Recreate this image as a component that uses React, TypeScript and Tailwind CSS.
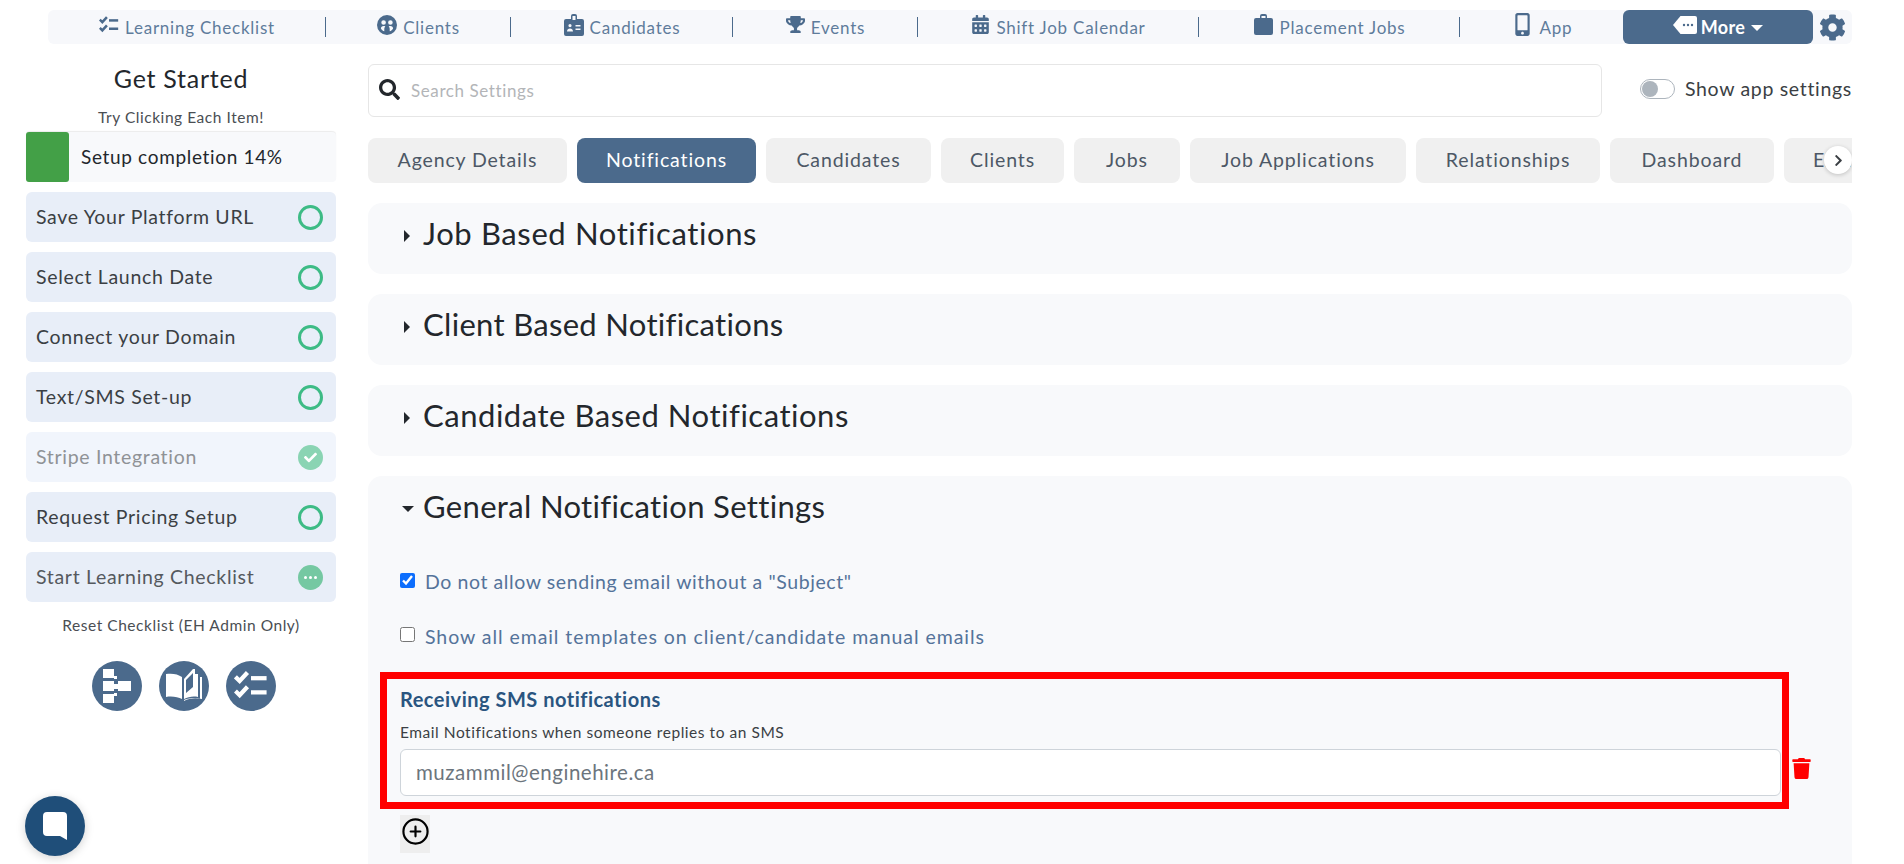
import { FaCalendarAlt, FaCheck, FaChevronRight, FaCog, FaMobileAlt, FaSearch, FaTrash, FaTrophy } from 'react-icons/fa';
import { CirclePlus } from 'lucide-react';
import type { ReactNode } from 'react';

const font = { fontFamily: '"Lato", "Noto Sans", sans-serif' };

function ChecksIcon({ size }: { size: number }) {
    return (
        <svg width={size} height={size} viewBox="0 0 24 24" fill="none" stroke="currentColor" strokeWidth="3">
            <path d="M1 5.5l3 3l5.5-6" />
            <path d="M1 15.5l3 3l5.5-6" />
            <path d="M12 6.5h11" />
            <path d="M12 16.5h11" />
        </svg>
    );
}

function ClientsIcon() {
    return (
        <svg width="20" height="20" viewBox="0 0 20 20" fill="currentColor">
            <path fillRule="evenodd" d="M10 0a10 10 0 1 1 0 20a10 10 0 0 1 0-20zM6.6 5.2a2.3 2.3 0 1 0 0 4.6a2.3 2.3 0 0 0 0-4.6zM13.4 5.2a2.3 2.3 0 1 0 0 4.6a2.3 2.3 0 0 0 0-4.6zM6.6 11c-1.6 0-2.7 1-2.7 2.4c.8 1.3 1.9 2.3 3.4 2.9v-2.6c0-.9.4-1.7 1-2.3c-.5-.3-1-.4-1.7-.4zM13.4 11c-.7 0-1.2.1-1.7.4c.6.6 1 1.4 1 2.3v2.6c1.5-.6 2.6-1.6 3.4-2.9c0-1.4-1.1-2.4-2.7-2.4z" />
        </svg>
    );
}

function BadgeIcon() {
    return (
        <svg width="20" height="22" viewBox="0 0 20 22" fill="currentColor">
            <path fillRule="evenodd" d="M7 5V2a2 2 0 0 1 2-2h2a2 2 0 0 1 2 2v3h5a2 2 0 0 1 2 2v13a2 2 0 0 1-2 2H2a2 2 0 0 1-2-2V7a2 2 0 0 1 2-2h5zM8.5 2v4h3V2h-3zM6 10a1.6 1.6 0 1 0 0 3.2a1.6 1.6 0 0 0 0-3.2zM3 17.5h6c0-1.700-1.300-3-3-3s-3 1.300-3 3zM11.500 11v1.500h5V11h-5zM11.500 14.500V16h5v-1.500h-5z" />
        </svg>
    );
}

function CaseIcon() {
    return (
        <svg width="19" height="21" viewBox="0 0 19 21" fill="currentColor">
            <path fillRule="evenodd" d="M6 4V2a2 2 0 0 1 2-2h3a2 2 0 0 1 2 2v2h4a2 2 0 0 1 2 2v13a2 2 0 0 1-2 2H2a2 2 0 0 1-2-2V6a2 2 0 0 1 2-2h4zM7.500 2v2h4V2h-4z" />
        </svg>
    );
}

function MoreTagIcon() {
    return (
        <svg width="24" height="20" viewBox="0 0 24 20">
            <path d="M7.5 1H22a2 2 0 0 1 2 2v14a2 2 0 0 1-2 2H7.5L0 10z" fill="#fff" />
            <circle cx="11" cy="10" r="1.2" fill="#4b6a8c" />
            <circle cx="15" cy="10" r="1.2" fill="#4b6a8c" />
            <circle cx="19" cy="10" r="1.2" fill="#4b6a8c" />
        </svg>
    );
}

function FlowIcon() {
    return (
        <svg width="28" height="34" viewBox="0 0 28 34" fill="#fff">
            <rect x="0" y="0" width="11" height="9" />
            <rect x="0" y="12" width="11" height="10" />
            <rect x="0" y="25" width="11" height="9" />
            <rect x="11" y="15" width="17" height="5" />
            <rect x="15" y="12" width="13" height="10" />
            <rect x="11" y="7" width="3" height="3" />
            <rect x="11" y="24" width="3" height="3" />
        </svg>
    );
}

function BookIcon() {
    return (
        <svg width="38" height="34" viewBox="0 0 38 34" fill="#fff">
            <path d="M1 5c6-1 12 0 16 3v22c-4-2-10-3-16-2z" />
            <path fillRule="evenodd" d="M19 30V10l9-10h2v5h3v23c-5-1-10 0-14 2zM21 24l7-6V4l-7 7z" />
            <path d="M35 8h2v22c-6-1.500-13-1-18 2v-1c5-2 11-2.500 16-1.500z" />
        </svg>
    );
}

function NavItem({ width, icon, label, sep = true, gap = 'mr-[6px]' }: { width: string; icon: ReactNode; label: string; sep?: boolean; gap?: string }) {
    return (
        <div className={`${width} h-full flex items-center justify-center relative`}>
            <span className={`text-[#4b6a8c] -mt-[5px] ${gap}`}>{icon}</span>
            <span className="text-[17px] tracking-[0.045em] text-[#5f7c9b] mt-px">{label}</span>
            {sep && <span className="absolute right-0 top-[7px] h-[20px] w-px bg-[#4b6a8c]" />}
        </div>
    );
}

function Tab({ width, label, active }: { width: string; label: string; active?: boolean }) {
    return (
        <div className={`${width} shrink-0 h-full pb-[2px] rounded-[8px] flex items-center justify-center text-[19.5px] tracking-[0.045em] ${active ? 'bg-[#4b6a8c] text-white' : 'bg-[#f0f0f0] text-[#4d5866]'}`}>
            {label}
        </div>
    );
}

function CheckItem({ label, state, faded }: { label: string; state: 'open' | 'done' | 'busy'; faded?: boolean }) {
    return (
        <div className={`h-[50px] rounded-[6px] pl-[10px] pr-[13px] flex items-center justify-between ${faded ? 'bg-[#f1f5fc]' : 'bg-[#e8eef8]'}`}>
            <span className={`text-[19.5px] tracking-[0.035em] ${faded ? 'text-[#8f9296]' : state === 'busy' ? 'text-[#55595e]' : 'text-[#3b3f44]'}`}>{label}</span>
            {state === 'open' && <span className="w-[25px] h-[25px] rounded-full border-[3px] border-[#3dbb85]" />}
            {state === 'done' && (
                <span className="w-[25px] h-[25px] rounded-full bg-[#8ad4b3] flex items-center justify-center text-white">
                    <FaCheck size={13} />
                </span>
            )}
            {state === 'busy' && (
                <span className="w-[25px] h-[25px] rounded-full bg-[#75c8a2] flex items-center justify-center gap-[2px]">
                    <span className="w-[3px] h-[3px] rounded-full bg-white" />
                    <span className="w-[3px] h-[3px] rounded-full bg-white" />
                    <span className="w-[3px] h-[3px] rounded-full bg-white" />
                </span>
            )}
        </div>
    );
}

function Accordion({ label, spacing }: { label: string; spacing: string }) {
    return (
        <div className="h-[71px] rounded-[14px] bg-[#f8f9fb] pl-[36px] pb-[10px] flex items-center text-[#23272c]">
            <span className="w-0 h-0 border-y-[6px] border-y-transparent border-l-[6px] border-l-[#23272c] mr-[13px] mt-[5px]" />
            <span className={`text-[31px] ${spacing}`}>{label}</span>
        </div>
    );
}

export default function App() {
    return (
        <div className="h-[864px] w-[1904px] overflow-hidden bg-white" style={font}>
            {/* top nav */}
            <div className="pt-[10px] pl-[48px]">
                <div className="w-[1804px] h-[34px] bg-[#f7f8fb] rounded-[6px] flex">
                    <NavItem width="w-[278px]" icon={<ChecksIcon size={20} />} label="Learning Checklist" />
                    <NavItem width="w-[185px]" icon={<ClientsIcon />} label="Clients" />
                    <NavItem width="w-[222px]" icon={<BadgeIcon />} label="Candidates" />
                    <NavItem width="w-[185px]" icon={<FaTrophy size={19} />} label="Events" />
                    <NavItem width="w-[281px]" icon={<FaCalendarAlt size={19} />} label="Shift Job Calendar" />
                    <NavItem width="w-[261px]" icon={<CaseIcon />} label="Placement Jobs" gap="mr-[7px]" />
                    <NavItem width="w-[163px]" icon={<FaMobileAlt size={23} />} label="App" sep={false} />
                    <div className="w-[190px] h-full rounded-[6px] bg-[#4b6a8c] text-white flex items-center justify-center gap-[4px]">
                        <span className="-mt-[4px]"><MoreTagIcon /></span>
                        <span className="text-[18px] font-bold tracking-[0.02em]">More</span>
                        <span className="w-0 h-0 border-x-[6px] border-x-transparent border-t-[6px] border-t-white ml-[2px] mt-[2px]" />
                    </div>
                    <div className="flex-1 flex items-center justify-center text-[#4b6a8c]">
                        <FaCog size={27} />
                    </div>
                </div>
            </div>

            <div className="flex pt-[16px]">
                {/* left checklist */}
                <div className="w-[310px] ml-[26px] shrink-0 flex flex-col">
                    <div className="h-[38px] flex items-center justify-center text-[25px] tracking-[0.03em] text-[#23272c]">Get Started</div>
                    <div className="h-[34px] pt-[6px] flex items-center justify-center text-[15.5px] tracking-[0.035em] text-[#4a4e53]">Try Clicking Each Item!</div>
                    <div className="h-[50px] bg-[#f8f9fb] rounded-[4px] flex items-center shadow-[0_-1px_1px_rgba(0,0,0,0.08)]">
                        <span className="w-[43px] h-full bg-[#43a047] rounded-[3px]" />
                        <span className="ml-[12px] text-[19px] tracking-[0.035em] text-[#23272c]">Setup completion 14%</span>
                    </div>
                    <div className="mt-[10px] flex flex-col gap-[10px]">
                        <CheckItem label="Save Your Platform URL" state="open" />
                        <CheckItem label="Select Launch Date" state="open" />
                        <CheckItem label="Connect your Domain" state="open" />
                        <CheckItem label="Text/SMS Set-up" state="open" />
                        <CheckItem label="Stripe Integration" state="done" faded />
                        <CheckItem label="Request Pricing Setup" state="open" />
                        <CheckItem label="Start Learning Checklist" state="busy" />
                    </div>
                    <div className="mt-[12px] text-center text-[15.5px] tracking-[0.035em] text-[#4a4e53]">Reset Checklist (EH Admin Only)</div>
                    <div className="mt-[24px] pl-[5px] flex justify-center gap-[17px]">
                        <span className="w-[50px] h-[50px] rounded-full bg-[#4b6a8c] flex items-center justify-center"><FlowIcon /></span>
                        <span className="w-[50px] h-[50px] rounded-full bg-[#4b6a8c] flex items-center justify-center"><BookIcon /></span>
                        <span className="w-[50px] h-[50px] rounded-full bg-[#4b6a8c] flex items-center justify-center text-white"><ChecksIcon size={34} /></span>
                    </div>
                </div>

                {/* settings */}
                <div className="w-[1484px] ml-[32px] shrink-0 pt-[4px]">
                    <div className="flex">
                        <div className="w-[1234px] h-[53px] rounded-[6px] border border-[#e6e6e6] flex items-center pl-[10px]">
                            <FaSearch size={21} className="text-[#23272c] -mt-[3px]" />
                            <span className="ml-[11px] text-[17px] tracking-[0.035em] text-[#b3b5b8] mt-px">Search Settings</span>
                        </div>
                        <div className="ml-[38px] h-[50px] flex items-center">
                            <span className="w-[35px] h-[20px] rounded-full border border-[#adb5bd] bg-white flex items-center pl-[1px]">
                                <span className="w-[16px] h-[16px] rounded-full bg-[#adb5bd]" />
                            </span>
                            <span className="ml-[10px] text-[19.5px] tracking-[0.035em] text-[#3b3f44] whitespace-nowrap">Show app settings</span>
                        </div>
                    </div>

                    <div className="relative mt-[21px] h-[45px] flex gap-[10px] overflow-hidden">
                        <Tab width="w-[199px]" label="Agency Details" />
                        <Tab width="w-[179px]" label="Notifications" active />
                        <Tab width="w-[165px]" label="Candidates" />
                        <Tab width="w-[123px]" label="Clients" />
                        <Tab width="w-[106px]" label="Jobs" />
                        <Tab width="w-[216px]" label="Job Applications" />
                        <Tab width="w-[184px]" label="Relationships" />
                        <Tab width="w-[164px]" label="Dashboard" />
                        <div className="w-[100px] shrink-0 h-full pb-[2px] rounded-[8px] bg-[#f0f0f0] pl-[29px] flex items-center text-[19.5px] tracking-[0.045em] text-[#4d5866]">Email</div>
                        <span className="absolute right-0 top-[8px] w-[28px] h-[28px] rounded-full bg-white shadow-[0_1px_4px_rgba(0,0,0,0.2)] flex items-center justify-center text-[#3b3f44]">
                            <FaChevronRight size={13} />
                        </span>
                    </div>

                    <div className="mt-[20px] flex flex-col gap-[20px]">
                        <Accordion label="Job Based Notifications" spacing="tracking-[0.02em]" />
                        <Accordion label="Client Based Notifications" spacing="tracking-[0.01em]" />
                        <Accordion label="Candidate Based Notifications" spacing="tracking-[0.017em]" />
                        <div className="h-[420px] rounded-t-[14px] bg-[#f8f9fb]">
                            <div className="h-[61px] pl-[34px] flex items-center text-[#23272c]">
                                <span className="w-0 h-0 border-x-[6px] border-x-transparent border-t-[6px] border-t-[#23272c] mr-[9px] mt-[5px]" />
                                <span className="text-[31px] tracking-[0.011em]">General Notification Settings</span>
                            </div>
                            <label className="mt-[34px] ml-[32px] flex items-center h-[22px]">
                                <input type="checkbox" defaultChecked className="w-[15px] h-[15px] accent-[#0d6efd] -mt-[3px]" />
                                <span className="ml-[10px] text-[19.5px] tracking-[0.03em] text-[#54739a]">Do not allow sending email without a "Subject"</span>
                            </label>
                            <label className="mt-[33px] ml-[32px] flex items-center h-[22px]">
                                <input type="checkbox" className="w-[15px] h-[15px] -mt-[5px]" />
                                <span className="ml-[10px] text-[19.5px] tracking-[0.048em] text-[#54739a]">Show all email templates on client/candidate manual emails</span>
                            </label>
                            <div className="mt-[24px] ml-[12px] flex items-center">
                                <div className="w-[1409px] h-[137px] border-[7px] border-[#ff0000] pl-[13px] pr-px">
                                    <div className="mt-[8px] h-[24px] flex items-center text-[20px] font-bold text-[#2a5580] tracking-[0.025em]">Receiving SMS notifications</div>
                                    <div className="mt-[12px] h-[20px] flex items-center text-[15.5px] tracking-[0.035em] text-[#3b3f44]">Email Notifications when someone replies to an SMS</div>
                                    <div className="mt-[6px] h-[47px] rounded-[6px] border border-[#ced4da] bg-white pl-[15px] flex items-center text-[20.5px] tracking-[0.025em] text-[#6c757d]">muzammil@enginehire.ca</div>
                                </div>
                                <FaTrash size={21} className="ml-[2px] mt-[55px] text-[#ff0000]" />
                            </div>
                            <div className="mt-[6px] ml-[32px] w-[30px] h-[38px] bg-[#eeeeee] flex items-start justify-center pt-[2px]">
                                <CirclePlus size={29} strokeWidth={1.8} className="text-black" />
                            </div>
                        </div>
                    </div>
                </div>
            </div>

            {/* chat bubble */}
            <div className="fixed left-[25px] top-[796px] w-[60px] h-[60px] rounded-full bg-[#1f4e79] shadow-[0_2px_10px_rgba(0,0,0,0.18)] flex items-center justify-center">
                <svg width="26" height="30" viewBox="0 0 26 30">
                    <path d="M5 1h16a4 4 0 0 1 4 4v24l-7-4H5a4 4 0 0 1-4-4V5a4 4 0 0 1 4-4z" fill="#fff" />
                </svg>
            </div>
        </div>
    );
}
